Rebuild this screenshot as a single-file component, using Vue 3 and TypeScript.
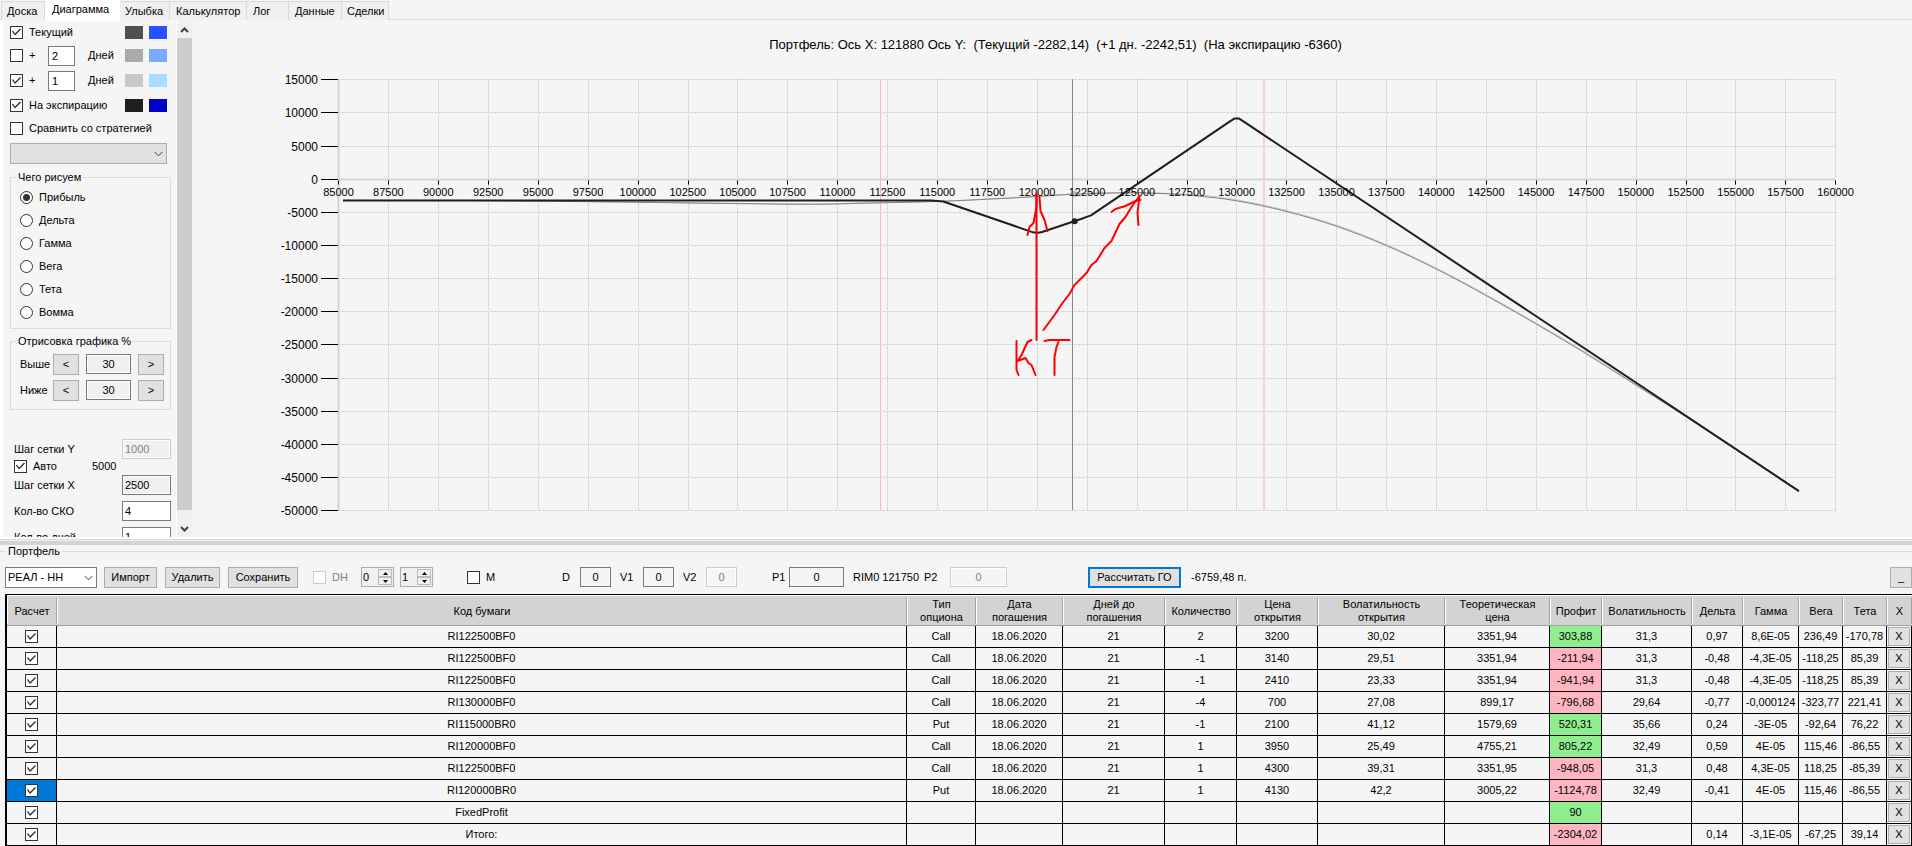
<script setup lang="ts">
import { computed, onBeforeUnmount, onMounted, ref } from 'vue'

type Point = [number, number]

const tabs = [
  { name: 'Доска', cls: 'w-first' },
  { name: 'Диаграмма', cls: 'active' },
  { name: 'Улыбка', cls: 'w-50' },
  { name: 'Калькулятор', cls: 'w-77' },
  { name: 'Лог', cls: 'w-42' },
  { name: 'Данные', cls: 'w-53' },
  { name: 'Сделки', cls: 'w-47' },
]

const modes = ['Прибыль', 'Дельта', 'Гамма', 'Вега', 'Тета', 'Вомма']
const mode = ref('Прибыль')
const above = ref('30')
const below = ref('30')

/* ---------- chart ---------- */
const chartBox = ref<HTMLElement | null>(null)
const size = ref({ w: 1720, h: 516 })
let observer: ResizeObserver | undefined

onMounted(() => {
  const el = chartBox.value
  if (!el) return
  const measure = () => {
    size.value = { w: el.clientWidth, h: el.clientHeight }
  }
  measure()
  observer = new ResizeObserver(measure)
  observer.observe(el)
})
onBeforeUnmount(() => observer?.disconnect())

const xMin = 85000
const xMax = 160000
const yMin = -50000
const yMax = 15000

const plot = computed(() => ({
  left: 146,
  right: size.value.w - 77,
  top: 58,
  bottom: size.value.h - 27,
}))

const sx = (v: number) =>
  plot.value.left + 0.5 + ((v - xMin) / (xMax - xMin)) * (plot.value.right - plot.value.left)
const sy = (v: number) =>
  plot.value.top + 0.5 + ((yMax - v) / (yMax - yMin)) * (plot.value.bottom - plot.value.top)
/* centre of the nearest device pixel, for hairlines */
const crisp = (v: number) => Math.round(v - 0.3) + 0.5

const xTicks = Array.from({ length: 31 }, (_, i) => xMin + i * 2500)
const yTicks = Array.from({ length: 14 }, (_, i) => yMax - i * 5000)

const expiration: Point[] = [
  [85225, -3240], [114700, -3240], [115300, -3400], [119800, -8050], [120000, -8150],
  [120250, -7990], [122200, -6040], [122700, -5500], [129700, 8750], [129900, 9130],
  [130100, 9130], [130300, 8750], [158170, -47080],
]

const current: Point[] = [
  [85225, -3250], [92000, -3260], [99850, -3510], [103610, -3660], [108620, -3815],
  [111125, -3665], [115000, -3390], [118140, -2960], [120000, -2640], [121880, -2282],
  [124150, -2100], [125900, -2150], [128010, -2560], [130000, -3300], [132470, -4880],
  [135000, -7130], [137500, -10050], [140000, -13580], [142500, -17590],
  [145000, -21870], [147500, -26340], [150000, -31080], [152500, -35850], [158170, -47080],
]

const nextDay = current.map(([x, y]): Point => [x, x > 127000 && x < 149000 ? y + 150 : y + 20])

const polyline = (pts: Point[]) => pts.map(([x, y]) => `${sx(x)},${sy(y)}`).join(' ')

const smooth = (pts: Point[]) => {
  const p = pts.map(([x, y]): Point => [sx(x), sy(y)])
  let d = `M${p[0][0]},${p[0][1]}`
  for (let i = 0; i < p.length - 1; i++) {
    const a = p[Math.max(i - 1, 0)]
    const b = p[i]
    const c = p[i + 1]
    const e = p[Math.min(i + 2, p.length - 1)]
    d += `C${b[0] + (c[0] - a[0]) / 6},${b[1] + (c[1] - a[1]) / 6} ${c[0] - (e[0] - b[0]) / 6},${c[1] - (e[1] - b[1]) / 6} ${c[0]},${c[1]}`
  }
  return d
}

/* Freehand pen strokes, in units of a 1497 x 431 plot area */
const strokes: Point[][] = [
  [[698, 115], [698, 261]],
  [[698, 115], [698, 128], [695, 144], [691, 148], [689, 156]],
  [[701, 118], [702, 132], [706, 141], [709, 152]],
  [[705, 251], [716, 236], [724, 224], [731, 215], [736, 206], [748, 194], [753, 186], [758, 182], [766, 169], [773, 162], [781, 145], [787, 138], [793, 128], [801, 117]],
  [[773, 133], [777, 130], [787, 127], [797, 122], [802, 121]],
  [[801, 117], [799, 134], [800, 146]],
  [[678, 262], [678, 291], [680, 296]],
  [[693, 261], [689, 263], [683, 276], [679, 282], [687, 279], [690, 284], [693, 286], [697, 296]],
  [[706, 262], [711, 261], [731, 261]],
  [[720, 263], [718, 268], [716, 278], [716, 296]],
]
const ink = (s: Point[]) => {
  const kx = (plot.value.right - plot.value.left) / 1497
  const ky = (plot.value.bottom - plot.value.top) / 431
  return s.map(([x, y]) => `${plot.value.left + 0.5 + x * kx},${plot.value.top + y * ky}`).join(' ')
}

/* ---------- portfolio ---------- */
const columns = [
  { title: 'Расчет', cls: 'c50' },
  { title: 'Код бумаги', cls: 'code' },
  { title: 'Тип\nопциона', cls: 'c69' },
  { title: 'Дата\nпогашения', cls: 'c87' },
  { title: 'Дней до\nпогашения', cls: 'c102' },
  { title: 'Количество', cls: 'c72' },
  { title: 'Цена\nоткрытия', cls: 'c81' },
  { title: 'Волатильность\nоткрытия', cls: 'c127' },
  { title: 'Теоретическая\nцена', cls: 'c105' },
  { title: 'Профит', cls: 'c52' },
  { title: 'Волатильность', cls: 'c90' },
  { title: 'Дельта', cls: 'c51' },
  { title: 'Гамма', cls: 'c56' },
  { title: 'Вега', cls: 'c44' },
  { title: 'Тета', cls: 'c44' },
  { title: 'X', cls: 'c25' },
]
const PROFIT = 8

const rows: string[][] = [
  ['RI122500BF0', 'Call', '18.06.2020', '21', '2', '3200', '30,02', '3351,94', '303,88', '31,3', '0,97', '8,6E-05', '236,49', '-170,78'],
  ['RI122500BF0', 'Call', '18.06.2020', '21', '-1', '3140', '29,51', '3351,94', '-211,94', '31,3', '-0,48', '-4,3E-05', '-118,25', '85,39'],
  ['RI122500BF0', 'Call', '18.06.2020', '21', '-1', '2410', '23,33', '3351,94', '-941,94', '31,3', '-0,48', '-4,3E-05', '-118,25', '85,39'],
  ['RI130000BF0', 'Call', '18.06.2020', '21', '-4', '700', '27,08', '899,17', '-796,68', '29,64', '-0,77', '-0,000124', '-323,77', '221,41'],
  ['RI115000BR0', 'Put', '18.06.2020', '21', '-1', '2100', '41,12', '1579,69', '520,31', '35,66', '0,24', '-3E-05', '-92,64', '76,22'],
  ['RI120000BF0', 'Call', '18.06.2020', '21', '1', '3950', '25,49', '4755,21', '805,22', '32,49', '0,59', '4E-05', '115,46', '-86,55'],
  ['RI122500BF0', 'Call', '18.06.2020', '21', '1', '4300', '39,31', '3351,95', '-948,05', '31,3', '0,48', '4,3E-05', '118,25', '-85,39'],
  ['RI120000BR0', 'Put', '18.06.2020', '21', '1', '4130', '42,2', '3005,22', '-1124,78', '32,49', '-0,41', '4E-05', '115,46', '-86,55'],
  ['FixedProfit', '', '', '', '', '', '', '', '90', '', '', '', '', ''],
  ['Итого:', '', '', '', '', '', '', '', '-2304,02', '', '0,14', '-3,1E-05', '-67,25', '39,14'],
]
const selectedRow = 7
const profitClass = (v: string) => (v.startsWith('-') ? 'loss' : 'gain')
</script>

<template>
  <div class="window">
    <nav class="tabs">
      <button v-for="t in tabs" :key="t.name" type="button" class="tab" :class="t.cls">{{ t.name }}</button>
    </nav>

    <main class="upper">
      <section class="settings">
        <div class="row r22">
          <label class="check"><input type="checkbox" checked /><span>Текущий</span></label>
          <i class="swatch dark1"></i><i class="swatch blue1"></i>
        </div>
        <div class="row r25">
          <label class="check plus"><input type="checkbox" /><span>+</span></label>
          <input id="days-a" class="field days" type="text" value="2" />
          <label for="days-a">Дней</label>
          <i class="swatch dark2"></i><i class="swatch blue2"></i>
        </div>
        <div class="row r25">
          <label class="check plus"><input type="checkbox" checked /><span>+</span></label>
          <input id="days-b" class="field days" type="text" value="1" />
          <label for="days-b">Дней</label>
          <i class="swatch dark3"></i><i class="swatch blue3"></i>
        </div>
        <div class="row r24">
          <label class="check"><input type="checkbox" checked /><span>На экспирацию</span></label>
          <i class="swatch dark4"></i><i class="swatch blue4"></i>
        </div>
        <div class="row r23">
          <label class="check"><input type="checkbox" /><span>Сравнить со стратегией</span></label>
        </div>
        <div class="combo strategy">
          <select aria-label="Стратегия" disabled><option></option></select>
          <svg viewBox="0 0 9 6" width="9" height="6"><path d="M.5.8 4.5 4.8 8.5.8" /></svg>
        </div>

        <fieldset class="group modes">
          <legend>Чего рисуем</legend>
          <label v-for="m in modes" :key="m" class="radio">
            <input v-model="mode" type="radio" name="mode" :value="m" /><span>{{ m }}</span>
          </label>
        </fieldset>

        <fieldset class="group range">
          <legend>Отрисовка графика %</legend>
          <div class="range-row">
            <label for="above">Выше</label>
            <button type="button" class="btn" aria-label="Выше меньше">&lt;</button>
            <input id="above" v-model="above" class="field readonly" type="text" readonly />
            <button type="button" class="btn" aria-label="Выше больше">&gt;</button>
          </div>
          <div class="range-row">
            <label for="below">Ниже</label>
            <button type="button" class="btn" aria-label="Ниже меньше">&lt;</button>
            <input id="below" v-model="below" class="field readonly" type="text" readonly />
            <button type="button" class="btn" aria-label="Ниже больше">&gt;</button>
          </div>
        </fieldset>

        <div class="grid-steps">
          <div class="step"><label for="step-y">Шаг сетки Y</label><input id="step-y" class="field" type="text" value="1000" disabled /></div>
          <div class="auto">
            <label class="check"><input type="checkbox" checked /><span>Авто</span></label>
            <span class="auto-value">5000</span>
          </div>
          <div class="step"><label for="step-x">Шаг сетки X</label><input id="step-x" class="field readonly" type="text" value="2500" readonly /></div>
          <div class="step spaced"><label for="sko">Кол-во СКО</label><input id="sko" class="field" type="text" value="4" /></div>
          <div class="step spaced"><label for="day-count">Кол-во дней</label><input id="day-count" class="field" type="text" value="1" /></div>
        </div>
      </section>

      <div class="scroll">
        <button type="button" aria-label="Вверх"><svg viewBox="0 0 9 6" width="9" height="6"><path d="M1 5 4.5 1.5 8 5" /></svg></button>
        <div class="thumb"></div>
        <button type="button" aria-label="Вниз"><svg viewBox="0 0 9 6" width="9" height="6"><path d="M1 1 4.5 4.5 8 1" /></svg></button>
      </div>

      <section ref="chartBox" class="chart">
        <svg :width="size.w" :height="size.h">
          <text class="title" :x="(plot.left + plot.right) / 2 - 31" y="28" text-anchor="middle">Портфель: Ось X: 121880 Ось Y:&#160; (Текущий -2282,14)&#160; (+1 дн. -2242,51)&#160; (На экспирацию -6360)</text>

          <g class="grid">
            <line v-for="v in yTicks" :key="'h' + v" :x1="plot.left" :x2="plot.right + 1" :y1="crisp(sy(v))" :y2="crisp(sy(v))" />
            <line v-for="v in xTicks" :key="'v' + v" :x1="crisp(sx(v))" :x2="crisp(sx(v))" :y1="plot.top" :y2="plot.bottom + 1" />
          </g>
          <g class="axis">
            <line :x1="plot.left" :x2="plot.right" :y1="crisp(sy(0))" :y2="crisp(sy(0))" />
            <line :x1="plot.left + 0.5" :x2="plot.left + 0.5" :y1="plot.top" :y2="plot.bottom" />
          </g>
          <g class="ticks">
            <line v-for="v in yTicks" :key="'ty' + v" :x1="plot.left - 17" :x2="plot.left" :y1="crisp(sy(v))" :y2="crisp(sy(v))" />
            <line v-for="v in xTicks" :key="'tx' + v" :x1="crisp(sx(v))" :x2="crisp(sx(v))" :y1="crisp(sy(0)) + 1" :y2="crisp(sy(0)) + 5" />
          </g>

          <g fill="none">
            <line class="sigma" :x1="crisp(sx(112145))" :x2="crisp(sx(112145))" :y1="plot.top" :y2="plot.bottom" />
            <line class="sigma wide" :x1="Math.round(sx(131350))" :x2="Math.round(sx(131350))" :y1="plot.top" :y2="plot.bottom" />
            <line class="price" :x1="crisp(sx(121750))" :x2="crisp(sx(121750))" :y1="plot.top" :y2="plot.bottom" />
            <path class="next-day" :d="smooth(nextDay)" />
            <path class="current" :d="smooth(current)" />
            <polyline class="expiration" :points="polyline(expiration)" />
          </g>
          <circle :cx="sx(121880)" :cy="sy(-2282)" r="3" fill="#b4b4b4" />
          <circle :cx="sx(121880)" :cy="sy(-6360)" r="3" fill="#1e1e1e" />

          <g class="y-labels">
            <text v-for="v in yTicks" :key="'ly' + v" :x="plot.left - 20" :y="crisp(sy(v)) + 4" text-anchor="end">{{ v }}</text>
          </g>
          <g class="x-labels">
            <text v-for="v in xTicks" :key="'lx' + v" :x="sx(v)" :y="crisp(sy(0)) + 16" text-anchor="middle">{{ v }}</text>
          </g>

          <g class="ink">
            <polyline v-for="(s, i) in strokes" :key="i" :points="ink(s)" />
          </g>
        </svg>
      </section>
    </main>

    <div class="splitter"></div>

    <fieldset class="portfolio">
      <legend>Портфель</legend>
      <div class="toolbar">
        <div class="combo account">
          <select aria-label="Портфель"><option>РЕАЛ - НН</option></select>
          <svg viewBox="0 0 9 6" width="9" height="6"><path d="M.5.8 4.5 4.8 8.5.8" /></svg>
        </div>
        <button type="button" class="btn b53">Импорт</button>
        <button type="button" class="btn b55">Удалить</button>
        <button type="button" class="btn b70">Сохранить</button>
        <label class="check dh"><input type="checkbox" disabled /><span>DH</span></label>
        <div v-for="n in ['0', '1']" :key="n" class="spinner">
          <input type="text" :value="n" aria-label="DH значение" />
          <div class="spin">
            <button type="button" aria-label="Больше"><svg viewBox="0 0 5 3" width="5" height="3"><path d="M0 3 2.5 0 5 3z" /></svg></button>
            <button type="button" aria-label="Меньше"><svg viewBox="0 0 5 3" width="5" height="3"><path d="M0 0 2.5 3 5 0z" /></svg></button>
          </div>
        </div>
        <label class="check m"><input type="checkbox" /><span>M</span></label>
        <label class="param w18">D<input class="field" type="text" value="0" /></label>
        <label class="param w23">V1<input class="field" type="text" value="0" /></label>
        <label class="param w23">V2<input class="field" type="text" value="0" disabled /></label>
        <label class="param p1">P1<input class="field" type="text" value="0" /></label>
        <span class="ticker">RIM0 121750</span>
        <label class="param p2">P2<input class="field" type="text" value="0" disabled /></label>
        <button type="button" class="btn primary">Рассчитать ГО</button>
        <span class="margin-value">-6759,48 п.</span>
        <button type="button" class="btn collapse" aria-label="Свернуть">_</button>
      </div>

      <table>
        <thead>
          <tr>
            <th v-for="(c, i) in columns" :key="i" scope="col" :class="c.cls"><div>{{ c.title }}</div></th>
          </tr>
        </thead>
        <tbody>
          <tr v-for="(r, ri) in rows" :key="ri">
            <td :class="{ selected: ri === selectedRow }"><input type="checkbox" checked :aria-label="'Расчет ' + r[0]" /></td>
            <td v-for="(v, ci) in r" :key="ci" :class="ci === PROFIT ? profitClass(v) : ''">{{ v }}</td>
            <td class="remove"><button type="button" :aria-label="'Удалить ' + r[0]">X</button></td>
          </tr>
        </tbody>
      </table>
    </fieldset>
  </div>
</template>

<style>
body {
  margin: 0;
  background: #f5f5f5;
}
</style>

<style scoped>
.window {
  display: flex;
  flex-direction: column;
  height: 100vh;
  min-height: 640px;
  overflow: hidden;
  background: #f5f5f5;
  color: #000;
  font: 11px/13px "Liberation Sans", Arial, sans-serif;
}
.window *,
.window *::before,
.window *::after {
  box-sizing: border-box;
}
button,
input,
select {
  margin: 0;
  padding: 0;
  border-radius: 0;
  color: inherit;
  font: inherit;
}

/* tabs */
.tabs {
  display: flex;
  flex: none;
  height: 21px;
  align-items: flex-start;
  padding-left: 1px;
  background: linear-gradient(#d9d9d9, #d9d9d9) 0 19px / 100% 1px no-repeat, #f5f5f5;
}
.tab {
  height: 19px;
  margin-top: 1px;
  padding: 1px 0 0 5px;
  border: 1px solid #d9d9d9;
  border-left: 0;
  border-bottom: 0;
  background: #f0f0f0;
  text-align: left;
  white-space: nowrap;
}
.w-first { width: 44px; border-left: 1px solid #d9d9d9; }
.w-50 { width: 50px; }
.w-77 { width: 77px; padding-left: 6px; }
.w-42 { width: 42px; padding-left: 6px; }
.w-53 { width: 53px; padding-left: 6px; }
.w-47 { width: 47px; }
.tab.active {
  width: 75px;
  height: 21px;
  margin-top: 0;
  padding: 0 0 3px 7px;
  border: 0;
  background: #fff;
}

/* upper pane */
.upper {
  display: flex;
  flex: 1;
  min-height: 0;
  border-left: 3px solid #fff;
}
.settings {
  flex: none;
  width: 174px;
  padding-left: 7px;
  border-right: 1px solid #fff;
  overflow: hidden;
}
.row {
  display: flex;
  align-items: center;
  width: 157px;
}
.r22 { height: 22px; }
.r23 { height: 23px; }
.r24 { height: 24px; }
.r25 { height: 25px; }
.check {
  display: flex;
  flex: 1;
  align-items: center;
  gap: 6px;
  white-space: nowrap;
}
.check.plus {
  flex: none;
  width: 38px;
}
input[type='checkbox'] {
  display: block;
  flex: none;
  width: 13px;
  height: 13px;
  border: 1px solid #333;
  background: #fff;
  appearance: none;
}
input[type='checkbox']:checked::after {
  display: block;
  width: 11px;
  height: 11px;
  background: #333;
  clip-path: polygon(1px 5px, 2px 4px, 4px 7px, 9px 2px, 10px 3px, 4px 9px);
  content: '';
}
input[type='checkbox']:disabled {
  border-color: #ccc;
}
.swatch {
  flex: none;
  width: 18px;
  height: 13px;
}
.swatch + .swatch { margin-left: 6px; }
.dark1 { background: #505050; }
.dark2 { background: #aaa; }
.dark3 { background: #c8c8c8; }
.dark4 { background: #1e1e1e; }
.blue1 { background: #2850ff; }
.blue2 { background: #78aaff; }
.blue3 { background: #aadcff; }
.blue4 { background: #0000c8; }
.field {
  height: 20px;
  border: 1px solid #7a7a7a;
  outline: 0;
  background: #fff;
}
.field.days {
  width: 27px;
  margin-right: 13px;
  padding-left: 3px;
}
.field.days + label { flex: 1; }
.field.readonly {
  background: #f0f0f0;
  box-shadow: inset 0 0 0 1px #fff;
}
.field:disabled {
  border-color: #ccc;
  background: #f0f0f0;
  box-shadow: inset 0 0 0 1px #fff;
  color: #808080;
}
.combo {
  position: relative;
}
.combo select {
  display: block;
  width: 100%;
  height: 21px;
  padding-left: 2px;
  border: 1px solid #7a7a7a;
  background: #fff;
  opacity: 1;
  appearance: none;
}
.combo svg {
  position: absolute;
  top: 8px;
  right: 4px;
  pointer-events: none;
}
.combo path,
.scroll path {
  fill: none;
  stroke: #404040;
}
.combo.strategy {
  width: 157px;
  margin-top: 3px;
}
.strategy select {
  border-color: #adadad;
  background: #e1e1e1;
}
.group {
  width: 161px;
  min-width: 0;
  margin: 6px 0 0;
  border: 1px solid #dcdcdc;
}
.group legend {
  height: 14px;
  margin-left: 5px;
  padding: 0 2px;
  line-height: 14px;
}
.modes { padding: 2px 0 4px; }
.radio {
  display: flex;
  height: 23px;
  align-items: center;
  gap: 6px;
  padding-left: 9px;
}
.radio input {
  width: 13px;
  height: 13px;
  border: 1px solid #333;
  border-radius: 50%;
  background: #fff;
  appearance: none;
}
.radio input:checked {
  background: radial-gradient(circle, #333 3px, #fff 4px);
}
.range {
  margin-top: 5px;
  padding: 3px 0 6px;
}
.range-row {
  display: flex;
  height: 26px;
  align-items: center;
  gap: 7px;
  padding-left: 9px;
}
.range-row label {
  width: 26px;
  white-space: nowrap;
}
.range-row .btn { width: 26px; }
.range-row .field {
  width: 45px;
  text-align: center;
}
.btn {
  flex: none;
  height: 21px;
  border: 1px solid #adadad;
  background: #e1e1e1;
  white-space: nowrap;
}
.grid-steps {
  width: 161px;
  margin-top: 29px;
  padding-left: 4px;
}
.step,
.auto {
  display: flex;
  align-items: center;
  justify-content: space-between;
}
.step .field {
  width: 49px;
  padding-left: 2px;
}
.step.spaced { margin-top: 6px; }
.auto {
  height: 14px;
  margin-bottom: 2px;
}
.auto .check {
  flex: none;
  width: 78px;
}
.auto-value { flex: 1; }

.scroll {
  display: flex;
  flex: none;
  flex-direction: column;
  width: 15px;
  background: #f0f0f0;
}
.scroll button {
  height: 17px;
  border: 0;
  background: #f0f0f0;
  line-height: 0;
}
.scroll path { stroke-width: 2; }
.thumb {
  flex: 1;
  margin-bottom: 10px;
  background: #cdcdcd;
}

/* chart */
.chart {
  flex: 1;
  min-width: 0;
  overflow: hidden;
}
.chart svg { display: block; }
.title { font-size: 13px; }
.y-labels { font-size: 12px; }
.grid line {
  stroke: #d3d3d3;
  stroke-dasharray: 3 1;
}
.axis line {
  stroke: #d3d3d3;
  stroke-width: 2;
}
.ticks line { stroke: #000; }
.sigma { stroke: #ffb6c1; }
.sigma.wide {
  stroke: #fad0d7;
  stroke-width: 2;
}
.price { stroke: #808890; }
.next-day { stroke: #c8c8c8; }
.current { stroke: #808080; }
.expiration {
  stroke: #1e1e1e;
  stroke-linejoin: round;
  stroke-width: 2;
}
.ink polyline {
  fill: none;
  stroke: #f00;
  stroke-linecap: round;
  stroke-linejoin: round;
  stroke-width: 2;
}

.splitter {
  flex: none;
  height: 8px;
  background: linear-gradient(#fff 2px, #d9d9d9 2px 3px, #f0f0f0 3px 4px, #d3d3d3 4px);
}

/* portfolio */
.portfolio {
  flex: none;
  min-width: 0;
  margin: 0;
  padding: 0 0 0 5px;
  border: 0;
  border-top: 1px solid #dcdcdc;
}
.portfolio legend {
  height: 13px;
  margin-left: 1px;
  padding: 0 2px;
}
.toolbar {
  display: flex;
  height: 36px;
  align-items: center;
  padding-top: 2px;
  white-space: nowrap;
}
.account {
  width: 92px;
  margin-right: 7px;
}
.b53 { width: 53px; margin-right: 8px; }
.b55 { width: 55px; margin-right: 8px; }
.b70 { width: 70px; margin-right: 15px; }
.check.dh {
  flex: none;
  width: 48px;
  color: #808080;
}
.spinner {
  display: flex;
  width: 33px;
  height: 20px;
  margin-right: 6px;
  padding: 1px;
  border: 1px solid #abadb3;
  background: #f0f0f0;
}
.spinner input {
  width: 15px;
  min-width: 0;
  border: 0;
  background: none;
}
.spin {
  display: flex;
  flex: 1;
  flex-direction: column;
}
.spin button {
  display: flex;
  flex: 1;
  align-items: center;
  justify-content: center;
  border: 1px solid #bbb;
  background: #f0f0f0;
}
.check.m {
  flex: none;
  width: 95px;
  margin-left: 28px;
}
.param {
  display: flex;
  align-items: center;
  justify-content: space-between;
  margin-right: 9px;
}
.param .field {
  width: 31px;
  background: #f5f5f5;
  text-align: center;
}
.w18 { width: 49px; }
.w23 { width: 54px; }
.p1 {
  width: 72px;
  margin-left: 26px;
}
.p1 .field { width: 55px; }
.ticker { width: 71px; }
.p2 {
  width: 83px;
  margin-right: 81px;
}
.p2 .field { width: 57px; }
.btn.primary {
  width: 93px;
  border: 2px solid #0078d7;
}
.margin-value { margin-left: 10px; }
.collapse {
  width: 22px;
  margin-left: auto;
}

table {
  width: 100%;
  border: 0 solid #000;
  border-top-width: 1px;
  border-left-width: 2px;
  border-collapse: separate;
  border-spacing: 0;
  table-layout: fixed;
}
.c25 { width: 25px; }
.c44 { width: 44px; }
.c50 { width: 50px; }
.c51 { width: 51px; }
.c52 { width: 52px; }
.c56 { width: 56px; }
.c69 { width: 69px; }
.c72 { width: 72px; }
.c81 { width: 81px; }
.c87 { width: 87px; }
.c90 { width: 90px; }
.c102 { width: 102px; }
.c105 { width: 105px; }
.c127 { width: 127px; }
th {
  height: 31px;
  padding: 2px 0 1px;
  border-top: 1px solid #fff;
  border-bottom: 1px solid #a0a0a0;
  background: #d3d3d3;
  font-weight: 400;
  white-space: pre-line;
}
th div {
  display: flex;
  height: 26px;
  align-items: center;
  justify-content: center;
  border-right: 1px solid #a0a0a0;
  border-left: 1px solid #fff;
}
td {
  height: 22px;
  padding: 0;
  border-right: 1px solid #000;
  border-bottom: 1px solid #000;
  text-align: center;
  white-space: nowrap;
}
td input[type='checkbox'] { margin: 0 auto; }
.selected { background: #0078d7; }
.gain { background: #90ee90; }
.loss { background: #ffb6c1; }
.remove button {
  display: block;
  width: 22px;
  height: 19px;
  margin: 0 auto;
  border: 1px solid #adadad;
  background: #e1e1e1;
}
</style>
